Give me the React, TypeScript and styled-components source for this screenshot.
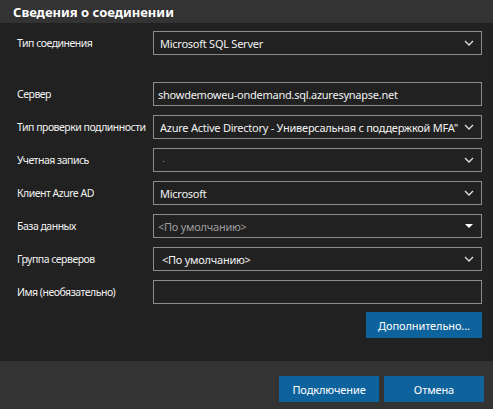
import React from "react";
import styled, { createGlobalStyle } from "styled-components";

const GlobalStyle = createGlobalStyle`
  html, body {
    margin: 0;
    padding: 0;
    background: #212121;
  }
  body {
    font-family: "Noto Sans", "Liberation Sans", sans-serif;
  }
`;

const Dialog = styled.div`
  width: 493px;
  height: 409px;
  display: flex;
  flex-direction: column;
  background: #212121;
  color: #f0f0f0;
  font-size: 11px;
  letter-spacing: -0.25px;
`;

const Header = styled.div`
  height: 23px;
  background: #333333;
  display: flex;
  align-items: center;
  padding-left: 13px;
  font-size: 13px;
  font-weight: 700;
  letter-spacing: 0;
  color: #ffffff;
`;

const Body = styled.div`
  flex: 1;
  padding: 8px 11px 0 17px;
  display: flex;
  flex-direction: column;
`;

const Form = styled.div`
  display: grid;
  grid-template-columns: 136px minmax(0, 1fr);
  row-gap: 9px;
  align-items: center;
`;

const Spacer = styled.div`
  grid-column: 1 / 3;
  height: 9px;
`;

const Label = styled.div`
  white-space: nowrap;
  color: #f2f2f2;
  font-size: 10.5px;
  letter-spacing: -0.5px;
`;

const Field = styled.div<{ $muted?: boolean; $indent?: number }>`
  min-width: 0;
  height: 24px;
  box-sizing: border-box;
  border: 1px solid #8c8c8c;
  display: flex;
  align-items: center;
  padding-left: ${(p) => p.$indent ?? 6}px;
  padding-right: 7px;
  color: ${(p) => (p.$muted ? "#9c9c9c" : "#f2f2f2")};
  white-space: nowrap;
  overflow: hidden;
`;

const FieldText = styled.span`
  flex: 1;
  min-width: 0;
  overflow: hidden;
`;

const Actions = styled.div`
  display: flex;
  justify-content: flex-end;
  margin-top: 8px;
`;

const Button = styled.button<{ $width: number }>`
  width: ${(p) => p.$width}px;
  height: 26px;
  border: none;
  background: #0e639c;
  color: #ffffff;
  font-family: inherit;
  font-size: 11px;
  letter-spacing: -0.1px;
  padding: 0;
  cursor: pointer;
`;

const Footer = styled.div`
  height: 48px;
  background: #333333;
  display: flex;
  justify-content: flex-end;
  align-items: flex-start;
  gap: 5px;
  padding: 15px 9px 0 0;
  box-sizing: border-box;
`;

const Chevron = () => (
  <svg width="10" height="6" viewBox="0 0 10 6">
    <path d="M1 1 L5 5 L9 1" fill="none" stroke="#e0e0e0" strokeWidth="1.3" />
  </svg>
);

const Caret = () => (
  <svg width="10" height="6" viewBox="0 0 10 6">
    <path d="M1 1 L9 1 L5 5 Z" fill="#ffffff" />
  </svg>
);

const Dot = styled.span`
  display: inline-block;
  width: 1px;
  height: 1px;
  background: #888;
  vertical-align: middle;
`;

export default function App() {
  return (
    <>
      <GlobalStyle />
      <Dialog>
        <Header>Сведения о соединении</Header>
        <Body>
          <Form>
            <Label>Тип соединения</Label>
            <Field $indent={6}>
              <FieldText>Microsoft SQL Server</FieldText>
              <Chevron />
            </Field>
            <Spacer />
            <Label>Сервер</Label>
            <Field $indent={4}>
              <FieldText>showdemoweu-ondemand.sql.azuresynapse.net</FieldText>
            </Field>
            <Label>Тип проверки подлинности</Label>
            <Field $indent={6}>
              <FieldText>Azure Active Directory - Универсальная с поддержкой MFA"</FieldText>
              <Chevron />
            </Field>
            <Label>Учетная запись</Label>
            <Field $indent={9}>
              <FieldText>
                <Dot />
              </FieldText>
              <Chevron />
            </Field>
            <Label>Клиент Azure AD</Label>
            <Field $indent={6}>
              <FieldText>Microsoft</FieldText>
              <Chevron />
            </Field>
            <Label>База данных</Label>
            <Field $muted $indent={4}>
              <FieldText>&lt;По умолчанию&gt;</FieldText>
              <Caret />
            </Field>
            <Label>Группа серверов</Label>
            <Field $indent={8}>
              <FieldText>&lt;По умолчанию&gt;</FieldText>
              <Chevron />
            </Field>
            <Label>Имя (необязательно)</Label>
            <Field />
          </Form>
          <Actions>
            <Button $width={116}>Дополнительно...</Button>
          </Actions>
        </Body>
        <Footer>
          <Button $width={100}>Подключение</Button>
          <Button $width={100}>Отмена</Button>
        </Footer>
      </Dialog>
    </>
  );
}
